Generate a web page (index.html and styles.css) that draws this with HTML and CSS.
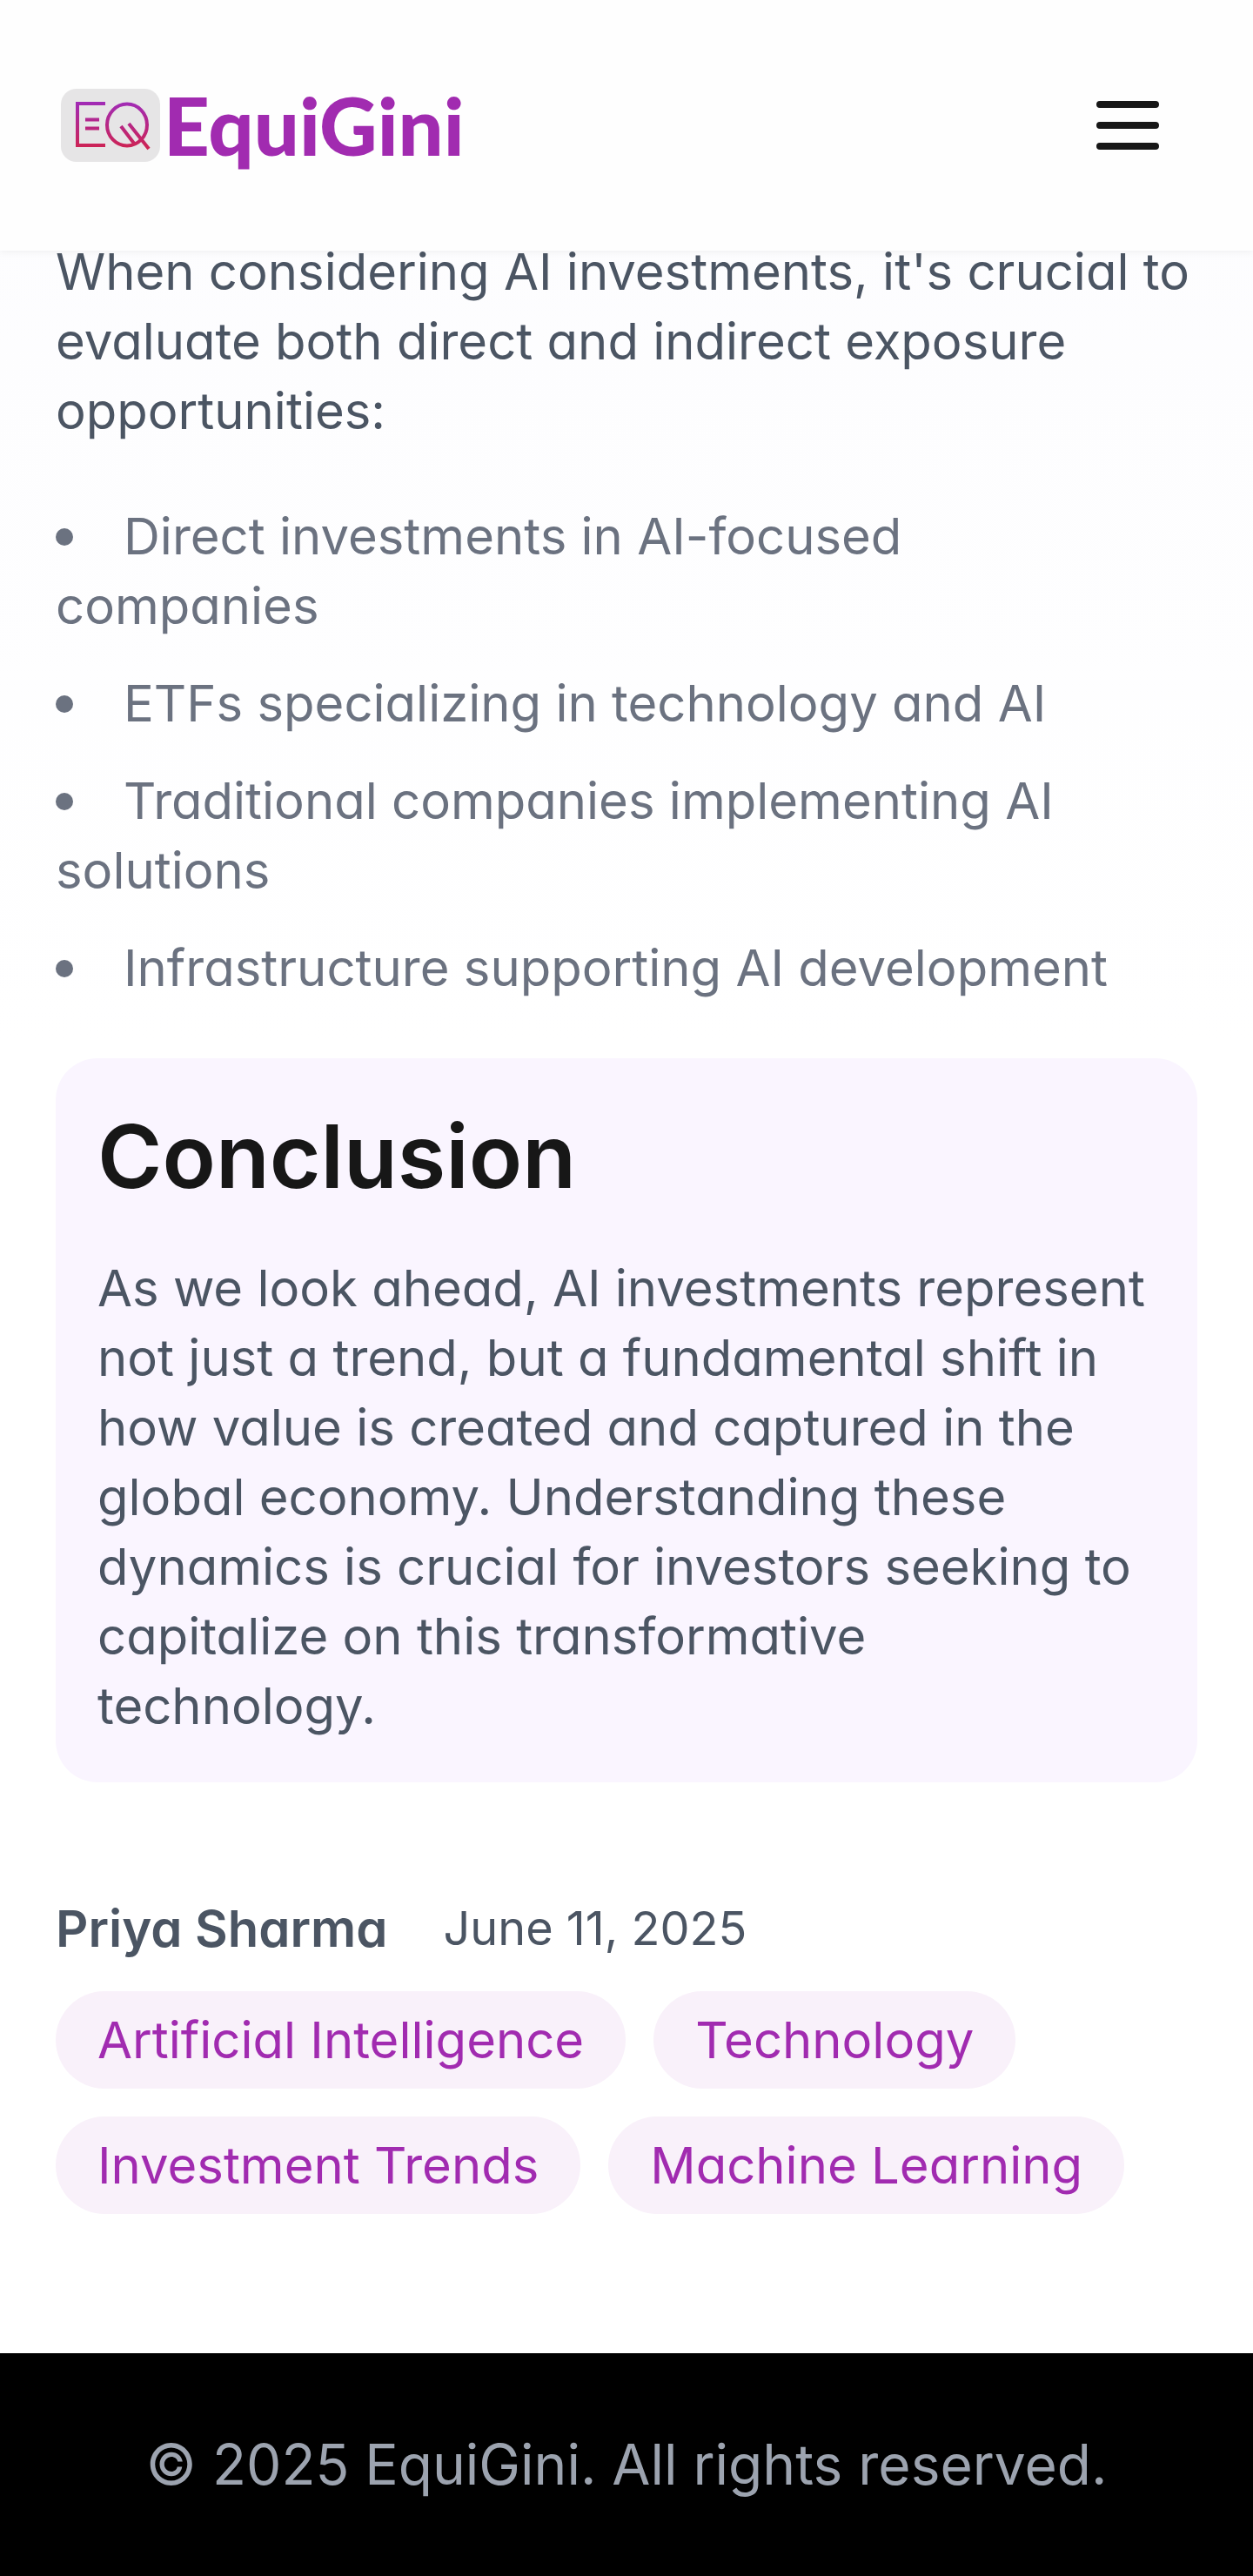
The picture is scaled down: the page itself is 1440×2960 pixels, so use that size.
FILE: index.html
```
<!DOCTYPE html>
<html lang="en">
<head>
<meta charset="utf-8">
<meta name="viewport" content="width=device-width, initial-scale=1">
<title>EquiGini</title>
<link rel="stylesheet" href="styles.css">
</head>
<body>
<header class="site-header">
  <a class="brand" href="#" aria-label="EquiGini home">
    <svg class="brand-mark" viewBox="0 0 114 84" fill="none" aria-hidden="true">
      <defs>
        <linearGradient id="mark" x1="0" y1="16" x2="0" y2="70" gradientUnits="userSpaceOnUse">
          <stop offset="0" stop-color="#a12bb5"/>
          <stop offset="1" stop-color="#cf2350"/>
        </linearGradient>
      </defs>
      <rect width="114" height="84" rx="18" fill="#e6e5e6"/>
      <g stroke="url(#mark)" stroke-width="4">
        <path d="M51 17H19V65H51M28 35.500L44 35.400M28 45.500L44 45.400"/>
        <ellipse cx="76" cy="41.500" rx="23" ry="24"/>
        <path d="M69 43L85 64M78 40L101 69"/>
      </g>
    </svg>
    <span class="brand-name">EquiGini</span>
  </a>
  <button class="menu-button" type="button" aria-label="Open menu">
    <svg viewBox="0 0 24 24" fill="none" stroke="currentColor" stroke-width="2" stroke-linecap="round" aria-hidden="true">
      <path d="M4 6h16M4 12h16M4 18h16"/>
    </svg>
  </button>
</header>
<main class="article">
  <p class="text">When considering AI investments, it's crucial to evaluate both direct and indirect exposure opportunities:</p>
  <ul class="points">
    <li>Direct investments in AI-focused<br>companies</li>
    <li>ETFs specializing in technology and AI</li>
    <li>Traditional companies implementing AI solutions</li>
    <li>Infrastructure supporting AI development</li>
  </ul>
  <section class="conclusion">
    <h2>Conclusion</h2>
    <p class="text">As we look ahead, AI investments represent not just a trend, but a fundamental shift in how value is created and captured in the global economy. Understanding these dynamics is crucial for investors seeking to capitalize on this transformative technology.</p>
  </section>
  <div class="byline">
    <span class="author">Priya Sharma</span>
    <time class="date" datetime="2025-06-11">June 11, 2025</time>
  </div>
  <div class="tags">
    <span class="tag">Artificial Intelligence</span>
    <span class="tag">Technology</span>
    <span class="tag">Investment Trends</span>
    <span class="tag">Machine Learning</span>
  </div>
</main>
<footer class="site-footer">
  <p>© 2025 EquiGini. All rights reserved.</p>
</footer>
</body>
</html>
```
FILE: styles.css
```
* { box-sizing: border-box; }

body {
  margin: 0;
  font: 400 58px/80px Inter, "Open Sans", sans-serif;
  font-feature-settings: "cv11";
  color: #4b5563;
  background: #fff;
}

p, ul, h2 { margin: 0; padding: 0; }

.site-header {
  position: fixed;
  top: 0;
  left: 0;
  right: 0;
  height: 288px;
  padding: 0 96px 0 70px;
  display: flex;
  align-items: center;
  justify-content: space-between;
  background: #fefefe;
  box-shadow: 0 2px 8px rgba(0, 0, 0, 0.05);
}

.brand {
  display: flex;
  align-items: center;
  gap: 4px;
  color: #a12bb0;
  text-decoration: none;
}

.brand-mark { width: 114px; height: 84px; }

.brand-name { font: 900 92px/96px Lato, sans-serif; }

.menu-button {
  width: 96px;
  height: 96px;
  padding: 0;
  border: 0;
  background: none;
  color: #171717;
}

.menu-button svg { display: block; width: 100%; height: 100%; }

.article {
  padding: 272px 64px 160px;
  background: linear-gradient(#fcfcfe, #fff 1200px);
}

.points {
  margin: 64px 0;
  display: flex;
  flex-direction: column;
  gap: 32px;
  list-style: none;
  color: #6b7280;
}

.points li::before {
  content: "";
  display: inline-block;
  width: 20px;
  height: 20px;
  margin-right: 58px;
  border-radius: 50%;
  background: currentColor;
  vertical-align: 10px;
}

.conclusion {
  padding: 48px;
  border-radius: 48px;
  background: #faf5ff;
}

.conclusion h2 {
  margin-bottom: 48px;
  font-size: 101px;
  font-weight: 600;
  line-height: 128px;
  color: #171717;
}

.byline {
  display: flex;
  flex-wrap: wrap;
  gap: 64px;
  margin: 128px 0 32px;
}

.author { font-weight: 600; }

.date { font-size: 54px; }

.tags { display: flex; flex-wrap: wrap; gap: 32px; }

.tag {
  padding: 16px 48px;
  border-radius: 56px;
  background: #f9f1fa;
  color: #a12bb0;
}

.site-footer {
  padding: 80px 64px;
  background: #000;
  color: #9ca3af;
  font-size: 64px;
  line-height: 96px;
  text-align: center;
}
```
